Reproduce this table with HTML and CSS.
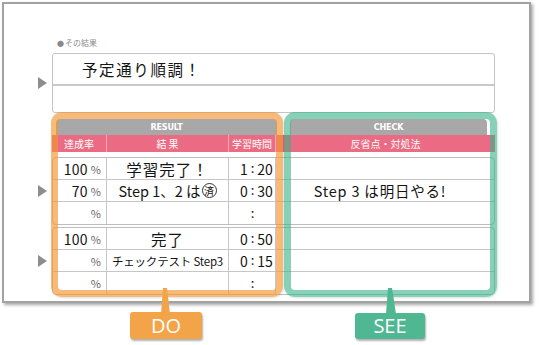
FILE: index.html
```html
<!DOCTYPE html>
<html lang="ja">
<head>
<meta charset="utf-8">
<title>その結果</title>
<link rel="stylesheet" href="styles.css">
</head>
<body>
<div class="page">
  <div class="paper">
    <div class="label"><span class="dot">●</span>その結果</div>
    <div class="row res-row">
      <span class="marker"></span>
      <div class="resbox">
        <div class="resline">予定通り順調！</div>
        <div class="resline"></div>
      </div>
    </div>

    <div class="thead">
      <div class="tab tab-result">RESULT</div>
      <div class="tab tab-check">CHECK</div>
    </div>
    <div class="subhead">
      <div class="sh">達成率</div>
      <div class="sh">結 果</div>
      <div class="sh">学習時間</div>
      <div class="sh">反省点・対処法</div>
    </div>

    <div class="row group-row first">
      <span class="marker"></span>
      <div class="group">
        <div class="c pct"><span class="num">100</span><span class="unit">%</span></div>
        <div class="c res big">学習完了！</div>
        <div class="c time"><span class="h">1</span><span class="colon">:</span><span class="m">20</span></div>
        <div class="c chk"></div>

        <div class="c pct"><span class="num">70</span><span class="unit">%</span></div>
        <div class="c res mid">Step 1、2 は<span class="circ">済</span></div>
        <div class="c time"><span class="h">0</span><span class="colon">:</span><span class="m">30</span></div>
        <div class="c chk">Step 3 は明日やる!</div>

        <div class="c pct"><span class="num"></span><span class="unit">%</span></div>
        <div class="c res"></div>
        <div class="c time"><span class="h"></span><span class="colon">:</span><span class="m"></span></div>
        <div class="c chk"></div>
      </div>
    </div>

    <div class="row group-row">
      <span class="marker"></span>
      <div class="group">
        <div class="c pct"><span class="num">100</span><span class="unit">%</span></div>
        <div class="c res big">完了</div>
        <div class="c time"><span class="h">0</span><span class="colon">:</span><span class="m">50</span></div>
        <div class="c chk"></div>

        <div class="c pct"><span class="num"></span><span class="unit">%</span></div>
        <div class="c res small">チェックテスト Step3</div>
        <div class="c time"><span class="h">0</span><span class="colon">:</span><span class="m">15</span></div>
        <div class="c chk"></div>

        <div class="c pct"><span class="num"></span><span class="unit">%</span></div>
        <div class="c res"></div>
        <div class="c time"><span class="h"></span><span class="colon">:</span><span class="m"></span></div>
        <div class="c chk"></div>
      </div>
    </div>
  </div>

  <div class="frame frame-do"></div>
  <div class="frame frame-see"></div>

  <svg class="stems" width="540" height="345" viewBox="0 0 540 345">
    <polygon points="163,288 167,288 170,314 161,314" fill="#f3a449"/>
    <polygon points="388,288 392,288 396,314 386,314" fill="#4fb791"/>
  </svg>
  <div class="callout callout-do">DO</div>
  <div class="callout callout-see">SEE</div>
</div>
</body>
</html>
```

FILE: styles.css
```css
* { box-sizing: border-box; }

html, body {
  margin: 0;
  padding: 0;
  background: #ffffff;
}

body {
  font-family: "Noto Sans CJK JP", "Noto Sans", sans-serif;
  color: #151515;
}

.page {
  position: relative;
  width: 540px;
  height: 345px;
  padding: 2px 0 0 2px;
  overflow: hidden;
}

.paper {
  width: 529px;
  height: 301px;
  border: 2px solid #a2a2a2;
  background: #fff;
  box-shadow: 2px 2px 3px rgba(0, 0, 0, 0.35);
  padding-top: 34px;
}

.label {
  margin-left: 53px;
  font-size: 8px;
  line-height: 10px;
  color: #8a8a8a;
}

.label .dot {
  font-size: 7px;
  margin-right: 1px;
}

.row {
  display: flex;
  align-items: center;
}

.marker {
  width: 0;
  height: 0;
  margin-left: 34px;
  margin-right: 5px;
  border-left: 9px solid #8d8d8d;
  border-top: 6px solid transparent;
  border-bottom: 6px solid transparent;
}

.res-row {
  margin-top: 5px;
}

.resbox {
  width: 443px;
  height: 60px;
  border: 1px solid #c4c4c4;
  border-radius: 3px;
  display: flex;
  flex-direction: column;
}

.resline {
  height: 30px;
  padding-left: 29px;
  font-size: 15.5px;
  letter-spacing: 1.6px;
  line-height: 31px;
}

.resline + .resline {
  border-top: 2px solid #c9c9c9;
  height: 28px;
}

.thead {
  margin-top: 6px;
  margin-left: 48px;
  width: 443px;
  height: 16px;
  display: flex;
}

.tab {
  background: #a8a8a8;
  border-radius: 4px 4px 0 0;
  color: #fff;
  font-family: "DejaVu Sans Condensed", "DejaVu Sans", sans-serif;
  font-stretch: condensed;
  font-weight: bold;
  font-size: 9px;
  line-height: 16px;
  text-align: center;
  letter-spacing: -0.2px;
}

.tab-result {
  margin-left: 4px;
  width: 221px;
}

.tab-check {
  margin-left: 13px;
  width: 197px;
}

.subhead {
  margin-left: 48px;
  width: 443px;
  height: 17px;
  display: grid;
  grid-template-columns: 55px 122px 47px 219px;
  background: #ea6b83;
}

.sh {
  color: #fff;
  font-size: 10px;
  line-height: 17px;
  text-align: center;
  border-right: 1px solid #f4a9b6;
}

.sh:last-child {
  border-right: none;
}

.group-row.first {
  margin-top: 5px;
}

.group-row + .group-row {
  margin-top: 2px;
}

.group {
  width: 443px;
  height: 68px;
  border: 1px solid #bdbdbd;
  border-radius: 4px;
  display: grid;
  grid-template-columns: 54px 122px 47px 218px;
  grid-template-rows: 22px 22px 22px;
}

.c {
  border-right: 1px solid #c6c6c6;
  border-bottom: 1px solid #c6c6c6;
  display: flex;
  align-items: center;
  justify-content: center;
  white-space: nowrap;
  overflow: hidden;
}

.group > .c:nth-last-child(-n+4) {
  border-bottom: none;
}

.c.chk {
  border-right: none;
  font-size: 14.5px;
  letter-spacing: 0.8px;
  padding-right: 10px;
}

.c.pct {
  justify-content: flex-end;
  padding-right: 5px;
  gap: 3px;
}

.pct .num {
  font-size: 14px;
  letter-spacing: 0.3px;
}

.pct .unit {
  font-size: 11px;
  color: #666;
}

.c.res.big {
  font-size: 15.5px;
  letter-spacing: 1px;
}

.c.res.mid {
  font-size: 14.5px;
}

.c.res.small {
  font-size: 11.5px;
  letter-spacing: -0.2px;
}

.circ {
  display: inline-flex;
  align-items: center;
  justify-content: center;
  width: 15px;
  height: 15px;
  margin-left: 1px;
  border: 1px solid #333;
  border-radius: 50%;
  font-size: 10px;
  line-height: 1;
}

.c.time {
  display: grid;
  grid-template-columns: 1fr auto 1fr;
  align-items: center;
  font-size: 14px;
  padding-left: 1px;
}

.time .h {
  text-align: right;
}

.time .colon {
  padding: 0 3px 2px;
  font-size: 13px;
}

.time .m {
  text-align: left;
}

.frame {
  position: absolute;
  top: 112px;
  height: 185px;
  border-width: 7px;
  border-style: solid;
  border-radius: 11px;
  box-shadow: 1px 1px 2px rgba(0, 0, 0, 0.12);
}

.frame-do {
  left: 51px;
  width: 232px;
  border-color: rgba(243, 150, 50, 0.66);
}

.frame-see {
  left: 284px;
  width: 213px;
  border-color: rgba(55, 178, 138, 0.6);
}

.stems {
  position: absolute;
  left: 0;
  top: 0;
}

.callout {
  position: absolute;
  height: 27px;
  border-radius: 3px;
  color: #fff;
  font-family: "Open Sans", "Noto Sans", sans-serif;
  font-size: 20px;
  line-height: 27px;
  text-align: center;
  box-shadow: 1px 2px 2px rgba(0, 0, 0, 0.3);
}

.callout-do {
  left: 130px;
  top: 312px;
  width: 72px;
  background: #f3a449;
}

.callout-see {
  left: 355px;
  top: 313px;
  width: 70px;
  height: 26px;
  line-height: 26px;
  background: #4fb791;
}
```
